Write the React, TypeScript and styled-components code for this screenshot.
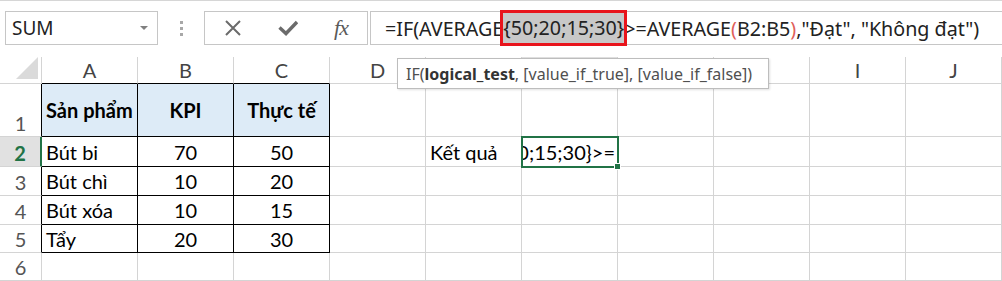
import React from 'react';
import styled, { createGlobalStyle } from 'styled-components';

const GlobalStyle = createGlobalStyle`
  html, body { margin: 0; padding: 0; background: #fff; }
  body { font-family: Lato, "Noto Sans", sans-serif; }
`;

const Page = styled.div`
  width: 1002px;
  height: 281px;
  overflow: hidden;
  background: #fff;
`;

const FormulaBar = styled.div`
  height: 57px;
  box-sizing: border-box;
  border-top: 1px solid #d6d6d6;
  display: flex;
  align-items: flex-start;
  padding: 10px 0 0 5px;
  & > * {
    flex-shrink: 0;
  }
`;

const NameBox = styled.div`
  width: 153px;
  height: 34px;
  box-sizing: border-box;
  border: 1px solid #c6c6c6;
  display: flex;
  align-items: center;
  justify-content: space-between;
  padding: 0 9px 0 6px;
  font-family: "Noto Sans", sans-serif;
  font-size: 19px;
  color: #222;
`;

const DropArrow = styled.span`
  width: 0;
  height: 0;
  border-left: 4px solid transparent;
  border-right: 4px solid transparent;
  border-top: 4px solid #808080;
`;

const DotsWrap = styled.div`
  width: 46px;
  height: 34px;
  display: flex;
  flex-direction: column;
  align-items: center;
  justify-content: center;
  gap: 3px;
`;

const Dot = styled.span`
  width: 3px;
  height: 3px;
  background: #a8a8a8;
`;

const ButtonGroup = styled.div`
  width: 164px;
  height: 34px;
  box-sizing: border-box;
  border: 1px solid #c6c6c6;
  display: flex;
  align-items: center;
`;

const IconSlot = styled.div<{ $w: number }>`
  width: ${p => p.$w}px;
  height: 100%;
  display: flex;
  align-items: center;
  justify-content: center;
  color: #6b6b6b;
`;

const Fx = styled.span`
  font-family: "Liberation Serif", serif;
  font-style: italic;
  font-size: 22px;
  color: #5a5a5a;
  letter-spacing: -1px;
`;

const FormulaInput = styled.div`
  margin-left: 2px;
  width: 660px;
  height: 34px;
  box-sizing: border-box;
  border: 1px solid #c6c6c6;
  display: flex;
  align-items: center;
  padding-left: 14px;
  font-family: "Noto Sans", sans-serif;
  font-size: 19.7px;
  color: #222;
  white-space: nowrap;
`;

const Highlight = styled.span`
  display: inline-block;
  height: 30px;
  line-height: 30px;
  background: #c8c8c8;
  outline: 3px solid #e8141c;
  position: relative;
  z-index: 1;
`;

const Paren = styled.span`
  color: #e0605a;
`;

const Sheet = styled.div`
  position: relative;
  display: grid;
  grid-template-columns: 42px repeat(10, 96px);
  grid-template-rows: 27px 53px 30px 29px 29px 28px 28px;
  font-family: Lato, "Noto Sans", sans-serif;
  font-size: 20px;
`;

const Corner = styled.div`
  box-sizing: border-box;
  border-right: 1px solid #d4d4d4;
  border-bottom: 1px solid #d4d4d4;
  display: flex;
  align-items: flex-end;
  justify-content: flex-end;
  padding: 0 3px 4px 0;
`;

const ColHead = styled.div<{ $active?: boolean; $tableTop?: boolean }>`
  box-sizing: border-box;
  border-right: 1px solid #d4d4d4;
  border-bottom: ${p => (p.$active ? '2px solid #217346' : p.$tableTop ? '1px solid #000' : '1px solid #d4d4d4')};
  background: ${p => (p.$active ? '#e1e1e1' : '#fff')};
  color: ${p => (p.$active ? '#217346' : '#444')};
  display: flex;
  align-items: center;
  justify-content: center;
`;

const RowHead = styled.div<{ $active?: boolean; $table?: boolean }>`
  box-sizing: border-box;
  border-right: ${p => (p.$active ? '2px solid #217346' : p.$table ? '1px solid #000' : '1px solid #d4d4d4')};
  border-bottom: 1px solid #d4d4d4;
  background: ${p => (p.$active ? '#e1e1e1' : '#fff')};
  color: ${p => (p.$active ? '#217346' : '#555')};
  font-weight: ${p => (p.$active ? 700 : 400)};
  display: flex;
  align-items: flex-end;
  justify-content: center;
  line-height: 26px;
`;

const Cell = styled.div<{
  $table?: boolean;
  $fill?: string;
  $bold?: boolean;
  $align?: 'left' | 'center' | 'right';
  $active?: boolean;
}>`
  position: relative;
  box-sizing: border-box;
  border-right: 1px solid ${p => (p.$table ? '#000' : '#d4d4d4')};
  border-bottom: 1px solid ${p => (p.$table ? '#000' : '#d4d4d4')};
  background: ${p => p.$fill || '#fff'};
  font-weight: ${p => (p.$bold ? 700 : 400)};
  color: #000;
  display: flex;
  align-items: center;
  justify-content: ${p => (p.$align === 'center' ? 'center' : p.$align === 'right' ? 'flex-end' : 'flex-start')};
  padding: 0 4px;
  white-space: nowrap;
  ${p =>
    p.$active
      ? `
    outline: 2px solid #217346;
    outline-offset: -1px;
    z-index: 2;
    padding: 0 2px 0 1px;
    &::after {
      content: '';
      position: absolute;
      right: -4px;
      bottom: -4px;
      width: 5px;
      height: 5px;
      background: #217346;
      border: 1px solid #fff;
    }
  `
      : ''}
`;

const Clip = styled.div`
  width: 100%;
  overflow: hidden;
  display: flex;
  justify-content: flex-end;
`;

const Tooltip = styled.div`
  position: absolute;
  left: 397px;
  top: 1px;
  width: 372px;
  height: 31px;
  box-sizing: border-box;
  border: 1px solid #bdbdbd;
  background: #fff;
  box-shadow: 1px 1px 2px rgba(0, 0, 0, 0.12);
  z-index: 5;
  display: flex;
  align-items: center;
  padding-left: 8px;
  font-family: "Noto Sans", sans-serif;
  font-size: 16px;
  color: #505050;
  white-space: nowrap;
`;

const Bold = styled.b`
  font-weight: 700;
  color: #333;
`;

const COLS = ['A', 'B', 'C', 'D', 'E', 'F', 'G', 'H', 'I', 'J'];

type CellDef = { text: string; bold?: boolean; align?: 'left' | 'center' | 'right'; fill?: string };

const BLUE = '#ddebf7';

const DATA: Record<string, CellDef> = {
  A1: { text: 'Sản phẩm', bold: true, align: 'left', fill: BLUE },
  B1: { text: 'KPI', bold: true, align: 'center', fill: BLUE },
  C1: { text: 'Thực tế', bold: true, align: 'center', fill: BLUE },
  A2: { text: 'Bút bi' },
  B2: { text: '70', align: 'center' },
  C2: { text: '50', align: 'center' },
  A3: { text: 'Bút chì' },
  B3: { text: '10', align: 'center' },
  C3: { text: '20', align: 'center' },
  A4: { text: 'Bút xóa' },
  B4: { text: '10', align: 'center' },
  C4: { text: '15', align: 'center' },
  A5: { text: 'Tẩy' },
  B5: { text: '20', align: 'center' },
  C5: { text: '30', align: 'center' },
  E2: { text: 'Kết quả' },
};

const ACTIVE_COL = 'F';
const ACTIVE_ROW = 2;
const ROWS = [1, 2, 3, 4, 5, 6];

const XIcon = () => (
  <svg width="18" height="18" viewBox="0 0 18 18">
    <path d="M2 2 L16 16 M16 2 L2 16" stroke="#6b6b6b" strokeWidth="2" fill="none" />
  </svg>
);

const CheckIcon = () => (
  <svg width="20" height="16" viewBox="0 0 20 16">
    <path d="M1.5 7.5 L8 13.5 L19 2" stroke="#6b6b6b" strokeWidth="3.4" fill="none" />
  </svg>
);

const SelectAll = () => (
  <svg width="22" height="22" viewBox="0 0 22 22">
    <polygon points="22,0 22,22 0,22" fill="#dadada" />
  </svg>
);

export default function App() {
  return (
    <Page>
      <GlobalStyle />
      <FormulaBar>
        <NameBox>
          <span>SUM</span>
          <DropArrow />
        </NameBox>
        <DotsWrap>
          <Dot />
          <Dot />
          <Dot />
        </DotsWrap>
        <ButtonGroup>
          <IconSlot $w={55}>
            <XIcon />
          </IconSlot>
          <IconSlot $w={55}>
            <CheckIcon />
          </IconSlot>
          <IconSlot $w={52}>
            <Fx>fx</Fx>
          </IconSlot>
        </ButtonGroup>
        <FormulaInput>
          <span>=IF(AVERAGE</span>
          <Highlight>{'{50;20;15;30}'}</Highlight>
          <span>{'>=AVERAGE'}</span>
          <Paren>(</Paren>
          <span>B2:B5</span>
          <Paren>)</Paren>
          <span>{',"Đạt", "Không đạt")'}</span>
        </FormulaInput>
      </FormulaBar>
      <Sheet>
        <Corner>
          <SelectAll />
        </Corner>
        {COLS.map(c => (
          <ColHead key={c} $active={c === ACTIVE_COL} $tableTop={c <= 'C'}>
            {c}
          </ColHead>
        ))}
        {ROWS.map(r => (
          <React.Fragment key={r}>
            <RowHead $active={r === ACTIVE_ROW} $table={r <= 5}>
              {r}
            </RowHead>
            {COLS.map(c => {
              const id = `${c}${r}`;
              const d = DATA[id];
              const inTable = c <= 'C' && r <= 5;
              const active = c === ACTIVE_COL && r === ACTIVE_ROW;
              return (
                <Cell
                  key={id}
                  $table={inTable}
                  $fill={d?.fill}
                  $bold={d?.bold}
                  $align={d?.align}
                  $active={active}
                >
                  {active ? <Clip>=IF(AVERAGE{'{50;20;15;30}>='}</Clip> : d?.text}
                </Cell>
              );
            })}
          </React.Fragment>
        ))}
        <Tooltip>
          IF(<Bold>logical_test</Bold>, [value_if_true], [value_if_false])
        </Tooltip>
      </Sheet>
    </Page>
  );
}
